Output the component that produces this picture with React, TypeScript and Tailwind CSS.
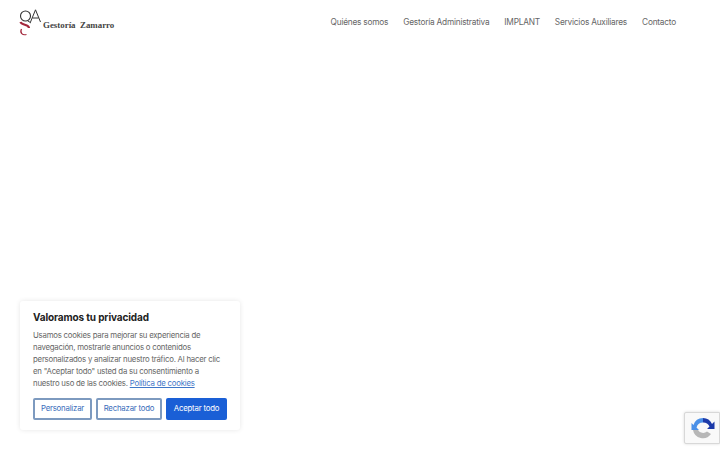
const font = { fontFamily: "Inter, 'Open Sans', sans-serif" };

const Logo = () => (
  <div className="flex items-end">
    <svg width="24" height="28" viewBox="0 0 24 28" className="block">
      <circle cx="6.5" cy="7" r="5" fill="none" stroke="#333" strokeWidth="1.1" />
      <path d="M9 12 L12 14" stroke="#333" strokeWidth="1" />
      <path d="M11.5 13 L16.5 0.8 L21.5 13 M13.5 9 H19.5" fill="none" stroke="#333" strokeWidth="1" />
      <path d="M1.5 13 C2.5 16.5 10 15 10 19" fill="none" stroke="#a3283c" strokeWidth="2.2" />
      <path d="M2.5 20 C0.5 24 3.5 26.5 7.5 25.5" fill="none" stroke="#a3283c" strokeWidth="1.2" />
    </svg>
    <span className="mb-[6px] text-[8.9px] leading-[12px] font-bold text-[#444] whitespace-pre" style={{ fontFamily: "'Liberation Serif', serif" }}>
      Gestoría  Zamarro
    </span>
  </div>
);

const links = ["Quiénes somos", "Gestoría Administrativa", "IMPLANT", "Servicios Auxiliares", "Contacto"];

const CookieBox = () => (
  <div className="absolute left-[20px] top-[301px] w-[220px] h-[129px] bg-white rounded-[3px] px-[13px] pt-[10px] shadow-[0_0_5px_rgba(0,0,0,0.1)]">
    <h2 className="text-[10px] leading-[13px] font-bold tracking-[-0.12px] text-[#212121]">Valoramos tu privacidad</h2>
    <p className="mt-[5px] text-[7.8px] leading-[12px] tracking-[-0.22px] text-[#666] whitespace-nowrap">
      Usamos cookies para mejorar su experiencia de<br />
      navegación, mostrarle anuncios o contenidos<br />
      personalizados y analizar nuestro tráfico. Al hacer clic<br />
      en "Aceptar todo" usted da su consentimiento a<br />
      nuestro uso de las cookies. <a className="underline text-[#3f77c8]">Política de cookies</a>
    </p>
    <div className="flex gap-[4px] mt-[9px] text-[7.8px] tracking-[-0.2px]">
      <button className="w-[59px] h-[22px] border-2 border-[#7d9abf] rounded-[2px] text-[#3a6dbb]">Personalizar</button>
      <button className="w-[66px] h-[22px] border-2 border-[#7d9abf] rounded-[2px] text-[#3a6dbb]">Rechazar todo</button>
      <button className="w-[61px] h-[22px] bg-[#1a5fd6] rounded-[2px] text-white">Aceptar todo</button>
    </div>
  </div>
);

const Recaptcha = () => (
  <div className="absolute right-0 top-[412px] w-[36px] h-[32px] bg-[#f9f9f9] border border-[#d8d8d8] rounded-l-[2px] shadow-[0_0_3px_rgba(0,0,0,0.15)] flex items-center pl-[6px]">
    <svg width="24" height="24" viewBox="0 0 24 24">
      <path d="M12 2 A10 10 0 0 0 2.5 9 L0.5 7 V14 H8 L5.5 11.5 A7 7 0 0 1 12 6.5 Z" fill="#4a90e8" />
      <path d="M12 2 A10 10 0 0 1 21 8 L23.5 5.5 V13 H16 L18.5 10.5 A7 7 0 0 0 12 6.5 Z" fill="#1c3aa9" />
      <path d="M2 14 A10 10 0 0 0 20 18 L16 15.5 A6 6 0 0 1 7 14 Z" fill="#b7b7b7" />
    </svg>
  </div>
);

export default function App() {
  return (
    <div className="relative w-[720px] h-[450px] bg-white overflow-hidden" style={font}>
      <header className="flex items-start justify-between pl-[19px] pr-[44px] pt-[9px]">
        <Logo />
        <nav className="flex gap-[15px] pt-[8px] text-[8.3px] leading-[10px] tracking-[-0.22px] text-[#666]">
          {links.map((l) => (
            <a key={l}>{l}</a>
          ))}
        </nav>
      </header>
      <CookieBox />
      <Recaptcha />
    </div>
  );
}
